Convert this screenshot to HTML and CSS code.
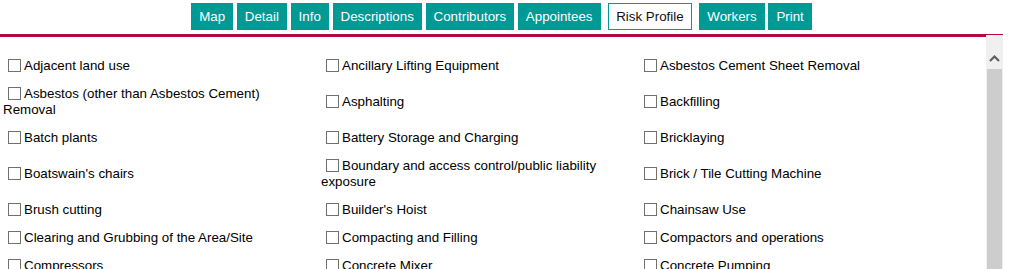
FILE: index.html
```html
<!DOCTYPE html>
<html lang="en">
<head>
<meta charset="utf-8">
<title>Risk Profile</title>
<link rel="stylesheet" href="styles.css">
</head>
<body>
<div class="page">
  <nav class="tabs">
    <a class="tab" href="#">Map</a>
    <a class="tab" href="#">Detail</a>
    <a class="tab" href="#">Info</a>
    <a class="tab" href="#">Descriptions</a>
    <a class="tab" href="#">Contributors</a>
    <a class="tab" href="#">Appointees</a>
    <a class="tab tab-active" href="#">Risk Profile</a>
    <a class="tab" href="#">Workers</a>
    <a class="tab" href="#">Print</a>
  </nav>
  <div class="main">
    <div class="content">
      <div class="grid">
        <div class="cell"><input type="checkbox" class="cb">Adjacent land use</div>
        <div class="cell"><input type="checkbox" class="cb">Ancillary Lifting Equipment</div>
        <div class="cell"><input type="checkbox" class="cb">Asbestos Cement Sheet Removal</div>

        <div class="cell"><input type="checkbox" class="cb">Asbestos (other than Asbestos Cement) Removal</div>
        <div class="cell"><input type="checkbox" class="cb">Asphalting</div>
        <div class="cell"><input type="checkbox" class="cb">Backfilling</div>

        <div class="cell"><input type="checkbox" class="cb">Batch plants</div>
        <div class="cell"><input type="checkbox" class="cb">Battery Storage and Charging</div>
        <div class="cell"><input type="checkbox" class="cb">Bricklaying</div>

        <div class="cell"><input type="checkbox" class="cb">Boatswain's chairs</div>
        <div class="cell"><input type="checkbox" class="cb">Boundary and access control/public liability exposure</div>
        <div class="cell"><input type="checkbox" class="cb">Brick / Tile Cutting Machine</div>

        <div class="cell"><input type="checkbox" class="cb">Brush cutting</div>
        <div class="cell"><input type="checkbox" class="cb">Builder's Hoist</div>
        <div class="cell"><input type="checkbox" class="cb">Chainsaw Use</div>

        <div class="cell"><input type="checkbox" class="cb">Clearing and Grubbing of the Area/Site</div>
        <div class="cell"><input type="checkbox" class="cb">Compacting and Filling</div>
        <div class="cell"><input type="checkbox" class="cb">Compactors and operations</div>

        <div class="cell"><input type="checkbox" class="cb">Compressors</div>
        <div class="cell"><input type="checkbox" class="cb">Concrete Mixer</div>
        <div class="cell"><input type="checkbox" class="cb">Concrete Pumping</div>

        <div class="cell"><input type="checkbox" class="cb">Concrete Saw Cutting</div>
        <div class="cell"><input type="checkbox" class="cb">Confined Spaces</div>
        <div class="cell"><input type="checkbox" class="cb">Cranes</div>
      </div>
    </div>
    <div class="scrollbar">
      <div class="sb-button">
        <svg width="11" height="7" viewBox="0 0 11 7" aria-hidden="true">
          <polyline points="1,6 5.5,1.5 10,6" fill="none" stroke="#606060" stroke-width="2.2"/>
        </svg>
      </div>
      <div class="sb-thumb"></div>
    </div>
  </div>
</div>
</body>
</html>
```

FILE: styles.css
```css
html, body {
  margin: 0;
  padding: 0;
  background: #ffffff;
  overflow: hidden;
  height: 100%;
}

body {
  font-family: "Liberation Sans", Arial, sans-serif;
  font-size: 13.333px;
  color: #000000;
}

.page {
  width: 1003px;
  height: 100%;
  display: flex;
  flex-direction: column;
}

.tabs {
  display: flex;
  justify-content: center;
  gap: 3.7px;
  padding: 3px 0 4px 0;
  border-bottom: 1px solid #b8053c;
}

.tab {
  display: block;
  background: #009a94;
  color: #ffffff;
  text-decoration: none;
  padding: 6px 8px;
  line-height: 15px;
  height: 15px;
}

.tab-active {
  background: #ffffff;
  color: #111111;
  border: 1px solid #009a94;
  padding: 5px 7px;
  margin: 0 4px;
}

.main {
  flex: 1;
  display: flex;
  min-height: 0;
}

.content {
  flex: 1;
  border-top: 2px solid #b8053c;
  padding: 15px 0 0 3px;
  overflow: hidden;
}

.grid {
  display: grid;
  grid-template-columns: 318px 318px 318px;
  align-items: center;
}

.cell {
  padding: 6px 8px 6px 0;
  line-height: 16px;
}

.cb {
  -webkit-appearance: none;
  appearance: none;
  width: 13px;
  height: 13px;
  margin: 0 3px 0 5px;
  border: 1px solid #707070;
  background: #ffffff;
  border-radius: 0;
  vertical-align: -2px;
  box-sizing: border-box;
}

.scrollbar {
  width: 17px;
  background: #f0f0f0;
  display: flex;
  flex-direction: column;
  padding-top: 14px;
}

.sb-button {
  height: 18px;
  display: flex;
  align-items: center;
  justify-content: center;
}

.sb-thumb {
  flex: 1;
  margin: 2px 1px 0 1px;
  background: #cdcdcd;
}
```
